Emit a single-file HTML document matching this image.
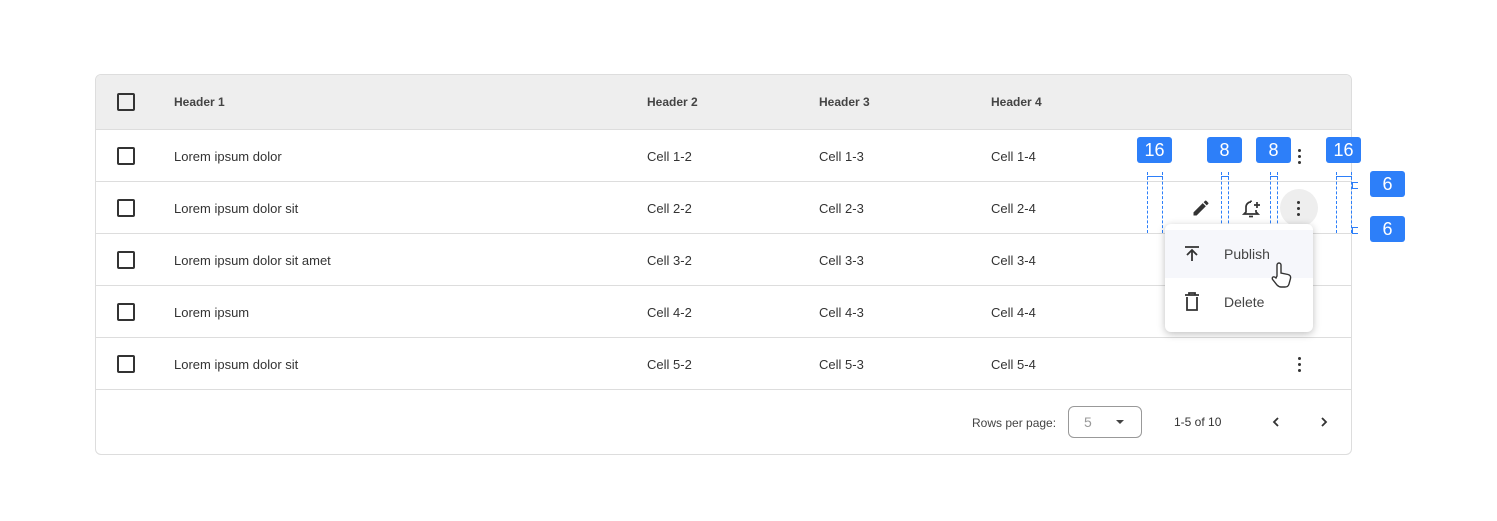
<!DOCTYPE html>
<html><head><style>
*{margin:0;padding:0;box-sizing:border-box}
body{width:1497px;height:521px;background:#fff;font-family:"Liberation Sans",sans-serif;color:#333;position:relative;overflow:hidden}
.a{position:absolute}
.tbl{left:95px;top:74px;width:1257px;height:381px;border:1px solid #ddd;border-radius:6px;overflow:hidden}
.hd{left:0;top:0;width:100%;height:55px;background:#eeeeee;border-bottom:1px solid #ddd}
.row{left:0;width:100%;height:52px;border-bottom:1px solid #ddd}
.t{font-size:13px;color:#333;line-height:16px}
.h{font-size:12px;font-weight:bold;color:#444}
.cb{width:18px;height:18px;border:2px solid #333;border-radius:2px}
.badge{background:#2d7ff9;color:#fff;font-size:18px;text-align:center;line-height:26px;height:26px;width:35px;border-radius:3px}
.dv{width:0;border-left:1px dashed #2d7ff9}
.kb{width:3px;height:3px;background:#333;border-radius:50%}
</style></head><body>
<div class="a tbl">
 <div class="a hd"></div>
 <div class="a row" style="top:55px"></div>
 <div class="a row" style="top:107px"></div>
 <div class="a row" style="top:159px"></div>
 <div class="a row" style="top:211px"></div>
 <div class="a row" style="top:263px"></div>
</div>
<div class="a cb" style="left:117px;top:93px"></div>
<div class="a cb" style="left:117px;top:147px"></div>
<div class="a cb" style="left:117px;top:199px"></div>
<div class="a cb" style="left:117px;top:251px"></div>
<div class="a cb" style="left:117px;top:303px"></div>
<div class="a cb" style="left:117px;top:355px"></div>
<div class="a t h" style="left:174px;top:94px">Header 1</div>
<div class="a t h" style="left:647px;top:94px">Header 2</div>
<div class="a t h" style="left:819px;top:94px">Header 3</div>
<div class="a t h" style="left:991px;top:94px">Header 4</div>

<div class="a t" style="left:174px;top:149px">Lorem ipsum dolor</div>
<div class="a t" style="left:647px;top:149px">Cell 1-2</div>
<div class="a t" style="left:819px;top:149px">Cell 1-3</div>
<div class="a t" style="left:991px;top:149px">Cell 1-4</div>
<div class="a t" style="left:174px;top:201px">Lorem ipsum dolor sit</div>
<div class="a t" style="left:647px;top:201px">Cell 2-2</div>
<div class="a t" style="left:819px;top:201px">Cell 2-3</div>
<div class="a t" style="left:991px;top:201px">Cell 2-4</div>
<div class="a t" style="left:174px;top:253px">Lorem ipsum dolor sit amet</div>
<div class="a t" style="left:647px;top:253px">Cell 3-2</div>
<div class="a t" style="left:819px;top:253px">Cell 3-3</div>
<div class="a t" style="left:991px;top:253px">Cell 3-4</div>
<div class="a t" style="left:174px;top:305px">Lorem ipsum</div>
<div class="a t" style="left:647px;top:305px">Cell 4-2</div>
<div class="a t" style="left:819px;top:305px">Cell 4-3</div>
<div class="a t" style="left:991px;top:305px">Cell 4-4</div>
<div class="a t" style="left:174px;top:357px">Lorem ipsum dolor sit</div>
<div class="a t" style="left:647px;top:357px">Cell 5-2</div>
<div class="a t" style="left:819px;top:357px">Cell 5-3</div>
<div class="a t" style="left:991px;top:357px">Cell 5-4</div>

<div class="a kb" style="left:1298px;top:149px"></div><div class="a kb" style="left:1298px;top:155px"></div><div class="a kb" style="left:1298px;top:161px"></div>
<div class="a" style="left:1280px;top:189px;width:38px;height:38px;border-radius:50%;background:#eee"></div>
<div class="a kb" style="left:1297px;top:201px"></div><div class="a kb" style="left:1297px;top:207px"></div><div class="a kb" style="left:1297px;top:213px"></div>
<div class="a kb" style="left:1298px;top:357px"></div><div class="a kb" style="left:1298px;top:363px"></div><div class="a kb" style="left:1298px;top:369px"></div>

<svg class="a" style="left:1191px;top:198px" width="20" height="20" viewBox="0 0 24 24"><path d="M3 17.25V21h3.75L17.81 9.94l-3.75-3.75L3 17.25zM20.71 7.04a1 1 0 000-1.41l-2.34-2.34a1 1 0 00-1.41 0l-1.83 1.83 3.75 3.75 1.83-1.83z" fill="#333"/></svg>
<svg class="a" style="left:1239px;top:197px" width="24" height="24" viewBox="0 0 24 24" fill="none" stroke="#333" stroke-width="1.7"><path d="M12 5a5 5 0 0 0-5 5v5l-2 2h14l-2-2v-2"/><path d="M10 19.5h4"/><path d="M12 3.5v1.5"/><path d="M18 5v6M15 8h6"/></svg>

<div class="a badge" style="left:1137px;top:137px">16</div>
<div class="a badge" style="left:1207px;top:137px">8</div>
<div class="a badge" style="left:1256px;top:137px">8</div>
<div class="a badge" style="left:1326px;top:137px">16</div>
<div class="a badge" style="left:1370px;top:171px">6</div>
<div class="a badge" style="left:1370px;top:216px">6</div>
<div class="a dv" style="left:1147px;top:172px;height:61px"></div>
<div class="a dv" style="left:1162px;top:172px;height:61px"></div>
<div class="a dv" style="left:1221px;top:172px;height:61px"></div>
<div class="a dv" style="left:1228px;top:172px;height:61px"></div>
<div class="a dv" style="left:1270px;top:172px;height:61px"></div>
<div class="a dv" style="left:1277px;top:172px;height:61px"></div>
<div class="a dv" style="left:1336px;top:172px;height:61px"></div>
<div class="a dv" style="left:1351px;top:172px;height:61px"></div>
<div class="a" style="left:1147px;top:176px;width:16px;border-top:1px solid #2d7ff9"></div>
<div class="a" style="left:1221px;top:176px;width:8px;border-top:1px solid #2d7ff9"></div>
<div class="a" style="left:1270px;top:176px;width:8px;border-top:1px solid #2d7ff9"></div>
<div class="a" style="left:1336px;top:176px;width:16px;border-top:1px solid #2d7ff9"></div>
<div class="a" style="left:1352px;top:182px;width:6px;height:7px;border-top:1px solid #2d7ff9;border-bottom:1px solid #2d7ff9;border-left:1px solid #2d7ff9"></div>
<div class="a" style="left:1352px;top:227px;width:6px;height:7px;border-top:1px solid #2d7ff9;border-bottom:1px solid #2d7ff9;border-left:1px solid #2d7ff9"></div>

<div class="a" style="left:1165px;top:224px;width:148px;height:108px;background:#fff;border-radius:6px;box-shadow:0 2px 8px rgba(0,0,0,.25)">
 <div class="a" style="left:0;top:6px;width:148px;height:48px;background:#f6f7fb"></div>
</div>
<svg class="a" style="left:1183px;top:245px" width="18" height="18" viewBox="0 0 18 18" fill="none" stroke="#333" stroke-width="1.8"><path d="M2 2h14M9 16V6M4 10l5-5 5 5"/></svg>
<div class="a t" style="left:1224px;top:246px;font-size:14px;color:#444">Publish</div>
<svg class="a" style="left:1184px;top:292px" width="16" height="19" viewBox="0 0 16 19" fill="none" stroke="#333" stroke-width="1.8"><path d="M1 3h14M5 3V1h6v2M3 5v13h10V5"/></svg>
<div class="a t" style="left:1224px;top:294px;font-size:14px;color:#444">Delete</div>
<svg class="a" style="left:1271px;top:262px" width="24" height="26" viewBox="0 0 24 26" fill="#fff" stroke="#333" stroke-width="1.4"><path d="M6 14V3a2 2 0 0 1 4 0v8l7 1.5c2 .5 3 2 2.5 4L18 22c-.5 2-2 3-4 3H10c-2 0-3-1-4-2L2 18c-1-1-1-2.5 0-3s2 0 3 1z"/></svg>

<div class="a t" style="left:972px;top:415px;font-size:12px;color:#444">Rows per page:</div>
<div class="a" style="left:1068px;top:406px;width:74px;height:32px;border:1px solid #999;border-radius:6px"></div>
<div class="a t" style="left:1084px;top:414px;font-size:14px;color:#999">5</div>
<div class="a" style="left:1116px;top:420px;border-left:4px solid transparent;border-right:4px solid transparent;border-top:4px solid #444"></div>
<div class="a t" style="left:1174px;top:414px;font-size:12px">1-5 of 10</div>
<svg class="a" style="left:1270px;top:416px" width="12" height="12" viewBox="0 0 12 12" fill="none" stroke="#333" stroke-width="1.8"><path d="M8 2L4 6l4 4"/></svg>
<svg class="a" style="left:1318px;top:416px" width="12" height="12" viewBox="0 0 12 12" fill="none" stroke="#333" stroke-width="1.8"><path d="M4 2l4 4-4 4"/></svg>
</body></html>
